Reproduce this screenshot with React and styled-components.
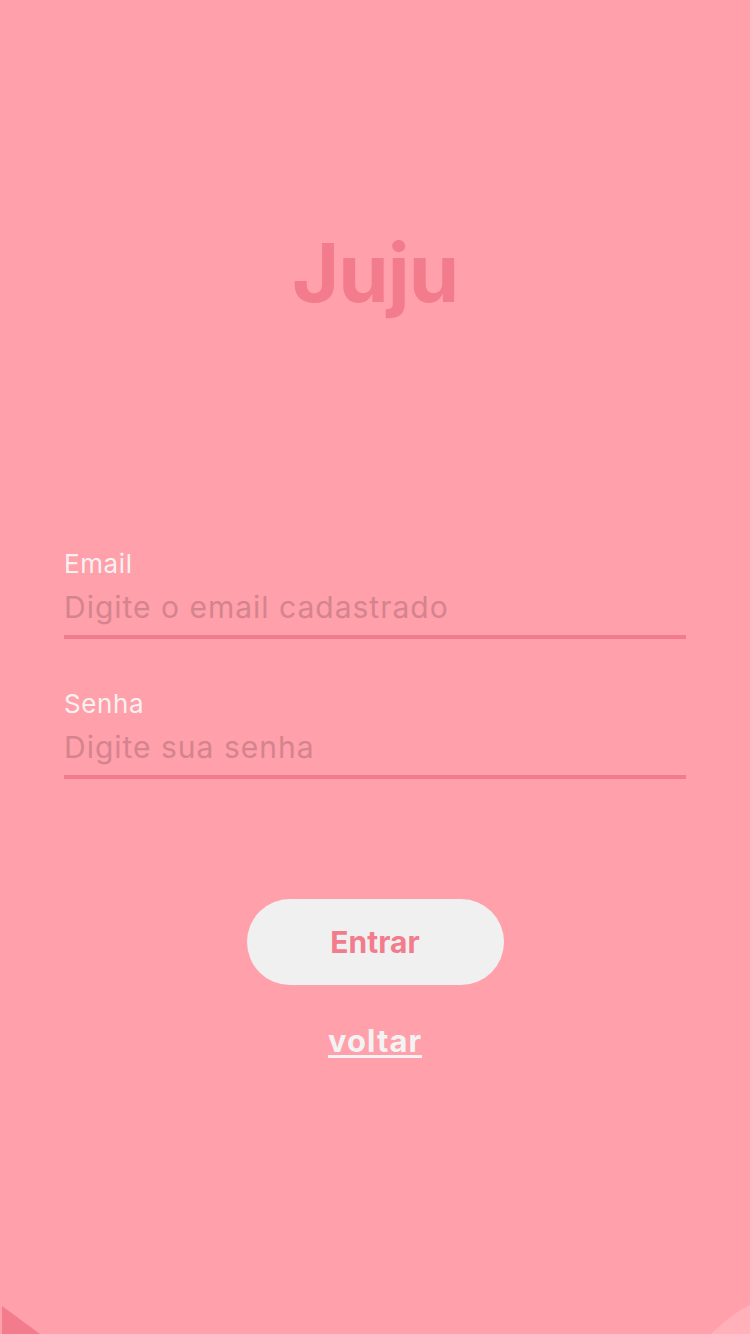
import React from "react";
import styled, { createGlobalStyle } from "styled-components";

const Global = createGlobalStyle`
  html, body { margin: 0; padding: 0; }
  body { background: #ffa0aa; font-family: "Inter", "Noto Sans", sans-serif; }
  * { box-sizing: border-box; }
`;

const Screen = styled.div`
  position: relative;
  width: 750px;
  height: 1334px;
  overflow: hidden;
  background: #ffa0aa;
  display: flex;
  flex-direction: column;
  align-items: center;
  padding-top: 225px;
`;

const Title = styled.h1`
  margin: 0;
  font-size: 81px;
  line-height: 96px;
  font-weight: 700;
  color: #f27c8c;
  letter-spacing: -1px;
`;

const Form = styled.form`
  width: 622px;
  margin-top: 228px;
  display: flex;
  flex-direction: column;
  gap: 50px;
`;

const Field = styled.label`
  display: flex;
  flex-direction: column;
`;

const Label = styled.span`
  font-size: 26px;
  line-height: 30px;
  letter-spacing: 0.6px;
  color: #f7f2f2;
`;

const Input = styled.input`
  margin-top: 10px;
  border: none;
  border-bottom: 4px solid #f27c8c;
  background: transparent;
  padding: 0 0 10px;
  font-family: inherit;
  font-size: 30px;
  line-height: 36px;
  letter-spacing: 1px;
  height: 50px;
  color: #c9747f;
  outline: none;
  &::placeholder { color: #d4848f; }
`;

const Button = styled.button`
  margin-top: 120px;
  width: 257px;
  height: 86px;
  border: none;
  border-radius: 43px;
  background: #f0f0f0;
  color: #f27c8c;
  font-family: inherit;
  font-size: 30px;
  font-weight: 700;
  padding: 0;
`;

const Back = styled.a`
  margin-top: 38px;
  font-size: 31px;
  line-height: 36px;
  font-weight: 700;
  letter-spacing: 1px;
  color: #f3f3f3;
  text-decoration: underline;
  text-underline-offset: 3px;
  text-decoration-thickness: 3px;
`;

const CornerLeft = styled.div`
  position: absolute;
  left: 2px;
  bottom: 0;
  width: 0;
  height: 0;
  border-left: 38px solid #f27c8c;
  border-top: 28px solid transparent;
`;

const CornerRight = styled.div`
  position: absolute;
  right: -219px;
  bottom: -254px;
  width: 300px;
  height: 300px;
  border-radius: 50%;
  background: #ffb0b8;
`;

export default function App() {
  return (
    <Screen>
      <Global />
      <Title>Juju</Title>
      <Form onSubmit={(e) => e.preventDefault()}>
        <Field>
          <Label>Email</Label>
          <Input type="email" placeholder="Digite o email cadastrado" />
        </Field>
        <Field>
          <Label>Senha</Label>
          <Input type="password" placeholder="Digite sua senha" />
        </Field>
      </Form>
      <Button>Entrar</Button>
      <Back href="#">voltar</Back>
      <CornerLeft />
      <CornerRight />
    </Screen>
  );
}
